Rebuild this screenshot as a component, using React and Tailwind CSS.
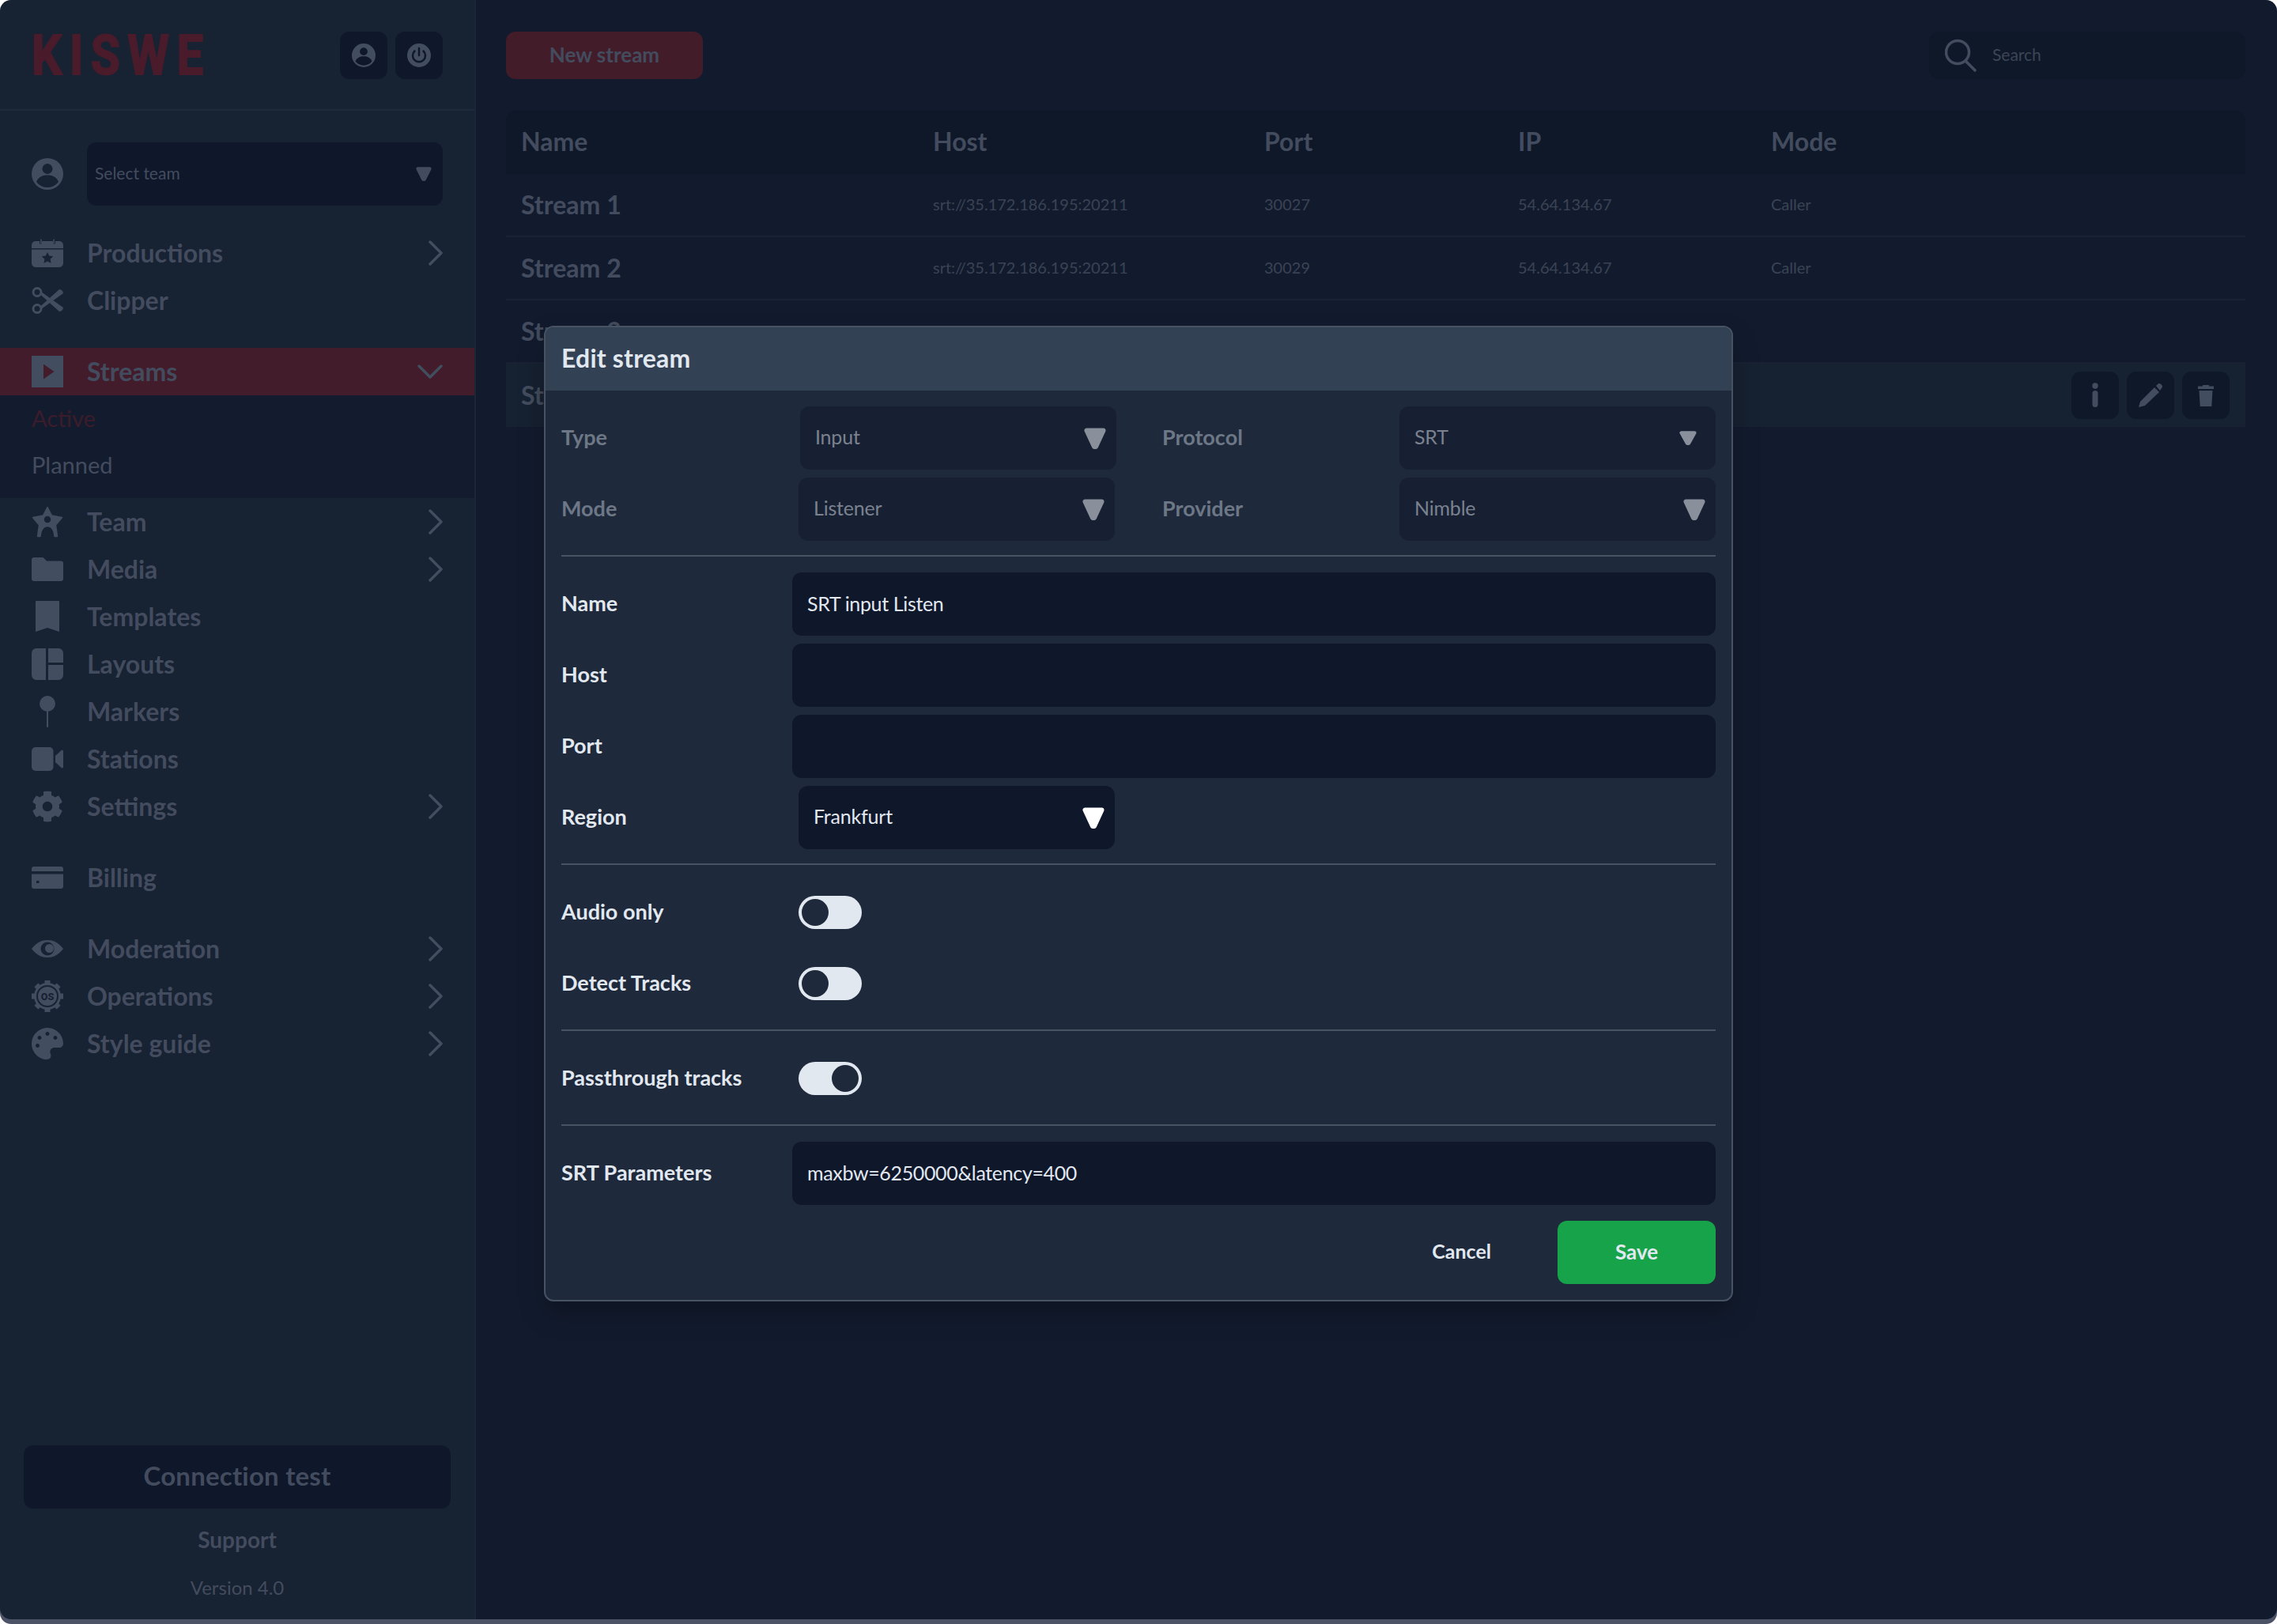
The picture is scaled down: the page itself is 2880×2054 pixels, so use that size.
import React from "react";
import { FaCog, FaPalette } from "react-icons/fa";

const Ic = ({ w = 40, h = 40, box = "0 0 40 40", children, cls = "" }) => (
  <svg width={w} height={h} viewBox={box} className={"fill-[#434d60] " + cls}>{children}</svg>
);

const D = "#172233";
const icons = {
  calendar: (
    <Ic h={36} box="0 0 40 36">
      <path d="M5 3h5v3a2 2 0 0 0 3 0V3h14v3a2 2 0 0 0 3 0V3h5a5 5 0 0 1 5 5v4H0V8a5 5 0 0 1 5-5z" />
      <path d="M11 0.500h1.600v6h-1.600zM27.400 0.500H29v6h-1.600z" />
      <path fillRule="evenodd" d="M0 13.500h40V31a5 5 0 0 1-5 5H5a5 5 0 0 1-5-5zM20 17l2.200 4.600 5 .7-3.600 3.500.9 5-4.500-2.400-4.500 2.400.9-5-3.600-3.500 5-.7z" />
    </Ic>
  ),
  clip: (
    <Ic h={36} box="0 0 40 36">
      <circle cx="7" cy="7.500" r="5" fill="none" stroke="#434d60" strokeWidth="3" />
      <circle cx="7" cy="28.500" r="5" fill="none" stroke="#434d60" strokeWidth="3" />
      <path d="M10.500 10 L13.500 8 L40 27 Q39.500 31.500 35 32 Z" />
      <path d="M10.500 26 L13.500 28 L40 9 Q39.500 4.500 35 4 Z" />
    </Ic>
  ),
  play: (
    <Ic>
      <path fillRule="evenodd" d="M0 0h40v40H0zM15 10.500v19L28.500 20z" />
    </Ic>
  ),
  team: (
    <Ic>
      <path
        fillRule="evenodd"
        stroke="#434d60"
        strokeWidth="1.500"
        strokeLinejoin="round"
        d="M20 1.500 L25.500 12 L38.500 14.500 L30.500 24 L32.500 38.500 L29 38.500 C29 31 25 25.500 20 25.500 C15 25.500 11 31 11 38.500 L7.500 38.500 L9.500 24 L1.500 14.500 L14.500 12 Z M20 12 a5 5 0 1 0 0.010 0 Z"
      />
    </Ic>
  ),
  folder: (
    <Ic h={30} box="0 0 40 30">
      <path d="M3 0h10.500a3 3 0 0 1 2.200 1l3.300 3.500H37a3 3 0 0 1 3 3V27a3 3 0 0 1-3 3H3a3 3 0 0 1-3-3V3a3 3 0 0 1 3-3z" />
    </Ic>
  ),
  bookmark: (
    <Ic w={30} h={40} box="0 0 30 40">
      <path d="M1 0h28a1 1 0 0 1 1 1v38l-15-5-15 5V1a1 1 0 0 1 1-1z" />
    </Ic>
  ),
  layouts: (
    <Ic>
      <path d="M6 0h12v40H6a6 6 0 0 1-6-6V6a6 6 0 0 1 6-6zM21 0h13a6 6 0 0 1 6 6v12H21zM21 21h19v13a6 6 0 0 1-6 6H21z" />
    </Ic>
  ),
  marker: (
    <Ic>
      <circle cx="20" cy="10" r="10" />
      <rect x="19" y="16" width="2" height="24" rx="1" />
    </Ic>
  ),
  video: (
    <Ic h={30} box="0 0 40 30">
      <rect x="0" y="0" width="27.500" height="30" rx="5" />
      <path d="M30 11 L37.500 4 Q40 2.500 40 5.500 V24.500 Q40 27.500 37.500 26 L30 19 Z" />
    </Ic>
  ),
  cog: <FaCog className="text-[#434d60] w-10 h-10" />,
  card: (
    <Ic h={28} box="0 0 40 28">
      <path fillRule="evenodd" d="M3 0h34a3 3 0 0 1 3 3v3H0V3a3 3 0 0 1 3-3zM0 9.500h40V25a3 3 0 0 1-3 3H3a3 3 0 0 1-3-3zM6 18v3h3.500v-3z" />
    </Ic>
  ),
  eye: (
    <Ic h={24} box="0 0 40 24">
      <path d="M0 12C6 4 13 1 20 1s14 3 20 11c-6 8-13 11-20 11S6 20 0 12z" />
      <circle cx="20" cy="12" r="8.500" fill={D} />
      <circle cx="22.500" cy="11.500" r="5.500" />
    </Ic>
  ),
  ops: (
    <Ic>
      <circle cx="20" cy="20" r="17" />
      {[0, 45, 90, 135, 180, 225, 270, 315].map((a) => (
        <rect key={a} x="16.500" y="0" width="7" height="8" transform={`rotate(${a} 20 20)`} />
      ))}
      <circle cx="20" cy="20" r="13" fill="none" stroke={D} strokeWidth="2" />
      <text x="20" y="24.500" textAnchor="middle" fontSize="12.500" fontWeight="900" fontFamily="Roboto, sans-serif" fill={D}>OS</text>
    </Ic>
  ),
  palette: <FaPalette className="text-[#434d60] w-10 h-10" />,
};

const UserDisc = ({ size = 40, bg = D }) => (
  <svg width={size} height={size} viewBox="0 0 40 40">
    <circle cx="20" cy="20" r="20" fill="#434d60" />
    <circle cx="20" cy="13.500" r="6.500" fill={bg} />
    <path d="M6 30c2-6 8-8.500 14-8.500S32 24 34 30a17.500 17.500 0 0 1-28 0z" fill={bg} />
  </svg>
);

const Chevron = () => (
  <svg width="18" height="32" viewBox="0 0 18 32" fill="none" stroke="#434d60" strokeWidth="3.500" strokeLinecap="round" strokeLinejoin="round">
    <path d="M2 2 L16 16 L2 30" />
  </svg>
);

const ChevronDown = () => (
  <svg width="32" height="18" viewBox="0 0 32 18" fill="none" stroke="#434d60" strokeWidth="3.500" strokeLinecap="round" strokeLinejoin="round">
    <path d="M2 2 L16 16 L30 2" />
  </svg>
);

const Arrow = ({ w = 28, h = 27, cls = "" }) => (
  <svg width={w} height={h} viewBox="0 0 28 27" preserveAspectRatio="none" className={cls}>
    <path d="M3.500 3.500 H24.500 L15 24 H13 Z" fill="currentColor" stroke="currentColor" strokeWidth="6" strokeLinejoin="round" />
  </svg>
);

const NavItem = ({ icon, label, chevron }) => (
  <div className="h-[60px] flex items-center pl-10 pr-10">
    <span className="w-10 flex justify-center shrink-0">{icons[icon]}</span>
    <span className="ml-[30px] text-[32px] font-bold text-[#434c5e] flex-1 leading-none">{label}</span>
    {chevron && <Chevron />}
  </div>
);

const Sidebar = () => (
  <aside className="w-[602px] shrink-0 h-full flex flex-col bg-[#172233] border-r-2 border-r-[#1a2536]">
    <div className="h-[140px] shrink-0 border-b-2 border-b-[#1e2a3b] flex items-start pt-10 pl-10 pr-10 justify-between">
      <span className="font-['Liberation_Sans_Narrow','Roboto',sans-serif] font-bold text-[70px] leading-[60px] tracking-[11px] text-[#4a1b2a] [-webkit-text-stroke:2px_#4a1b2a] scale-x-[0.86] origin-left">KISWE</span>
      <div className="flex gap-2.5">
        <div className="w-[60px] h-[60px] rounded-xl bg-[#0f172a] flex items-center justify-center"><UserDisc size={30} bg="#0f172a" /></div>
        <div className="w-[60px] h-[60px] rounded-xl bg-[#0f172a] flex items-center justify-center">
          <svg width="30" height="30" viewBox="0 0 30 30">
            <circle cx="15" cy="15" r="15" fill="#434d60" />
            <path d="M9.500 9.500a8 8 0 1 0 11 0M15 6v9" fill="none" stroke="#0f172a" strokeWidth="2.500" strokeLinecap="round" />
          </svg>
        </div>
      </div>
    </div>
    <div className="mt-10 pl-10 pr-10 flex items-center gap-[30px]">
      <UserDisc />
      <div className="h-20 flex-1 rounded-xl bg-[#0f172a] flex items-center justify-between pl-2.5 pr-[14px]">
        <span className="text-[21px] text-[#434c5e] pb-[3px]">Select team</span>
        <Arrow w={20} h={18} cls="text-[#434c5e]" />
      </div>
    </div>
    <div className="mt-[30px]">
      <NavItem icon="calendar" label="Productions" chevron />
      <NavItem icon="clip" label="Clipper" />
    </div>
    <div className="mt-[30px] h-[60px] bg-[#421c2a] flex items-center pl-10 pr-10">
      <span className="w-10 flex justify-center shrink-0">{icons.play}</span>
      <span className="ml-[30px] text-[32px] font-bold text-[#434c5e] flex-1 leading-none">Streams</span>
      <ChevronDown />
    </div>
    <div className="h-[130px] bg-[#131c2e] pl-10 text-[29px] text-[#434c5e]">
      <div className="h-[58px] flex items-center text-[#3c1b2b]">Active</div>
      <div className="h-[60px] flex items-center">Planned</div>
    </div>
    <NavItem icon="team" label="Team" chevron />
    <NavItem icon="folder" label="Media" chevron />
    <NavItem icon="bookmark" label="Templates" />
    <NavItem icon="layouts" label="Layouts" />
    <NavItem icon="marker" label="Markers" />
    <NavItem icon="video" label="Stations" />
    <NavItem icon="cog" label="Settings" chevron />
    <div className="mt-[30px]"><NavItem icon="card" label="Billing" /></div>
    <div className="mt-[30px]">
      <NavItem icon="eye" label="Moderation" chevron />
      <NavItem icon="ops" label="Operations" chevron />
      <NavItem icon="palette" label="Style guide" chevron />
    </div>
    <div className="mt-auto px-[30px] pb-2.5 text-[#434c5e] flex flex-col items-center">
      <div className="h-20 w-full rounded-xl bg-[#0f172a] flex items-center justify-center text-[33px] font-bold tracking-[0.2px] pb-[3px]">Connection test</div>
      <div className="h-[60px] mt-2.5 flex items-center text-[28px] font-bold pb-[3px]">Support</div>
      <div className="h-[60px] flex items-center text-[24px]">Version 4.0</div>
    </div>
  </aside>
);

const COLS = "grid grid-cols-[521px_419px_321px_320px_1fr] items-center pl-[19px]";
const rows = [
  ["Stream 1", "srt://35.172.186.195:20211", "30027", "54.64.134.67", "Caller"],
  ["Stream 2", "srt://35.172.186.195:20211", "30029", "54.64.134.67", "Caller"],
  ["Stream 3", "rtmps://wts.dashkiswe.com/live/strav01main", "", "", ""],
  ["Stream 4", "", "", "", ""],
];

const CELL = "text-[20px] text-[#3a4354] whitespace-nowrap pb-[2px]";

const Main = () => (
  <main className="flex-1 h-full bg-[#121b2e] pl-[38px] pr-10 pt-10">
    <div className="flex items-center justify-between h-[60px]">
      <div className="w-[249px] h-[60px] rounded-xl bg-[#431c2a] flex items-center justify-center text-[26px] font-bold text-[#434c5e] pb-[2px]">New stream</div>
      <div className="w-[400px] h-[60px] rounded-xl bg-[#0f1829] flex items-center pl-5 gap-5">
        <svg width="40" height="42" viewBox="0 0 40 42" fill="none" stroke="#434d60" strokeWidth="3.500" strokeLinecap="round">
          <circle cx="16" cy="17" r="14.500" />
          <path d="M27 29 L38 40" />
        </svg>
        <span className="text-[21px] text-[#3c4556] pb-[3px]">Search</span>
      </div>
    </div>
    <div className="mt-10">
      <div className={COLS + " h-20 rounded-t-xl bg-[#0f1829] text-[32px] font-bold text-[#434c5e]"}>
        <span className="pb-[3px]">Name</span><span className="pb-[3px]">Host</span><span className="pb-[3px]">Port</span><span className="pb-[3px]">IP</span><span className="pb-[3px]">Mode</span>
      </div>
      {rows.map((r, i) => (
        <div key={r[0]} className={COLS + " h-20 " + (i === 3 ? "bg-[#162131] relative" : "border-b-2 border-b-[#182233]")}>
          <span className="text-[32px] font-bold text-[#434c5e]">{r[0]}</span>
          <span className={CELL}>{r[1]}</span>
          <span className={CELL}>{r[2]}</span>
          <span className={CELL}>{r[3]}</span>
          <span className={CELL}>{r[4]}</span>
          {i === 3 && (
            <div className="absolute right-5 top-2.5 flex gap-2.5">
              <div className="w-[60px] h-[60px] rounded-xl bg-[#0f1829] flex items-center justify-center">
                <svg width="8" height="32" viewBox="0 0 8 32" className="fill-[#434d60]">
                  <circle cx="4" cy="4" r="3.700" />
                  <rect x="0.500" y="10" width="7" height="21" rx="3.500" />
                </svg>
              </div>
              <div className="w-[60px] h-[60px] rounded-xl bg-[#0f1829] flex items-center justify-center">
                <svg width="32" height="32" viewBox="0 0 32 32" className="fill-[#434d60]">
                  <path d="M1 31 L3 24 L21 6 L27 12 L9 29 Z" />
                  <path d="M23 4 L25 2 a3 3 0 0 1 4.200 0 l0.800 0.800 a3 3 0 0 1 0 4.200 L28 10 Z" />
                </svg>
              </div>
              <div className="w-[60px] h-[60px] rounded-xl bg-[#0f1829] flex items-center justify-center">
                <svg width="20" height="27" viewBox="0 0 20 27" className="fill-[#434d60]">
                  <path d="M6 0h8v1.500h6V5H0V1.500h6z" />
                  <path d="M1.500 7h17l-1.200 19.500a0.500 0.500 0 0 1-.5.500H3.200a0.500 0.500 0 0 1-.5-.5z" />
                </svg>
              </div>
            </div>
          )}
        </div>
      ))}
    </div>
  </main>
);

const LABEL = "text-[27px] font-bold leading-none pb-[3px]";
const Select = ({ value, disabled, w = "w-[400px]", arrow, cls = "" }) => (
  <div className={`${w} h-20 rounded-xl flex items-center justify-between pl-[19px] ${disabled ? "bg-[#172032] text-[#7a8290]" : "bg-[#0f172a] text-[#e2e8f0]"} ${cls}`}>
    <span className="text-[25px] tracking-[-0.2px] pb-[2px]">{value}</span>
    {arrow}
  </div>
);

const Input = ({ value }) => (
  <div className="flex-1 h-20 rounded-xl bg-[#0f172a] flex items-center pl-[19px] pr-5 text-[25px] tracking-[-0.35px] text-[#e2e8f0] pb-[1px]">{value}</div>
);

const Toggle = ({ on }) => (
  <div className={`w-20 h-[42px] rounded-full bg-[#e2e8f0] flex items-center p-1 ${on ? "justify-end" : "justify-start"}`}>
    <div className="w-[34px] h-[34px] rounded-full bg-[#1e293b]" />
  </div>
);

const Hr = ({ cls = "mt-[18px] mb-5" }) => <div className={"h-0.5 bg-[#475263] " + cls} />;

const Row = ({ label, children, cls = "" }) => (
  <div className={"h-20 flex items-center " + cls}>
    <span className={LABEL + " w-[292px] shrink-0 text-[#e2e8f0]"}>{label}</span>
    {children}
  </div>
);

const Modal = () => (
  <div className="absolute left-[688px] top-[412px] w-[1504px] rounded-xl border-2 border-[#475263] bg-[#1e293b] shadow-[0_16px_32px_rgba(0,0,0,0.25)] overflow-hidden">
    <div className="h-20 bg-[#334155] flex items-center pl-5 text-[32px] font-bold tracking-[0.2px] text-[#e2e8f0] pb-[2px]">Edit stream</div>
    <div className="p-5 flex flex-col">
      <div className="grid grid-cols-[760px_1fr] gap-y-2.5 text-[#6d7786]">
        <div className="h-20 flex items-center">
          <span className={LABEL + " w-[302px]"}>Type</span>
          <Select disabled value="Input" arrow={<Arrow cls="text-[#8a909b] mr-[13px]" />} />
        </div>
        <div className="h-20 flex items-center">
          <span className={LABEL + " w-[300px]"}>Protocol</span>
          <Select disabled value="SRT" arrow={<Arrow w={22} h={18} cls="text-[#8a909b] mr-6" />} />
        </div>
        <div className="h-20 flex items-center">
          <span className={LABEL + " w-[300px]"}>Mode</span>
          <Select disabled value="Listener" arrow={<Arrow cls="text-[#8a909b] mr-[13px]" />} />
        </div>
        <div className="h-20 flex items-center">
          <span className={LABEL + " w-[300px]"}>Provider</span>
          <Select disabled value="Nimble" arrow={<Arrow cls="text-[#8a909b] mr-[13px]" />} />
        </div>
      </div>
      <Hr />
      <div className="flex flex-col gap-2.5">
        <Row label="Name"><Input value="SRT input Listen" /></Row>
        <Row label="Host"><Input /></Row>
        <Row label="Port"><Input /></Row>
        <Row label="Region">
          <Select value="Frankfurt" cls="ml-2" arrow={<Arrow cls="text-white mr-[13px]" />} />
        </Row>
      </div>
      <Hr />
      <div className="flex flex-col gap-2.5">
        <Row label="Audio only"><div className="ml-2"><Toggle /></div></Row>
        <Row label="Detect Tracks"><div className="ml-2"><Toggle /></div></Row>
      </div>
      <Hr />
      <Row label="Passthrough tracks"><div className="ml-2"><Toggle on /></div></Row>
      <Hr />
      <Row label="SRT Parameters"><Input value="maxbw=6250000&latency=400" /></Row>
      <div className="mt-5 flex justify-end items-center">
        <span className="text-[25px] font-bold text-[#e2e8f0] mr-[84px] pb-[2px]">Cancel</span>
        <div className="w-[200px] h-20 rounded-xl bg-[#16a34a] flex items-center justify-center text-[26px] font-bold text-[#e2e8f0] pb-[2px]">Save</div>
      </div>
    </div>
  </div>
);

export default function App() {
  return (
    <div className="relative w-[2880px] h-[2054px] bg-white overflow-hidden font-[Lato,sans-serif]">
      <div className="h-full rounded-[14px] bg-[#4d5366] overflow-hidden">
        <div className="h-[2048px] flex rounded-[14px] overflow-hidden">
          <Sidebar />
          <Main />
        </div>
      </div>
      <Modal />
    </div>
  );
}
